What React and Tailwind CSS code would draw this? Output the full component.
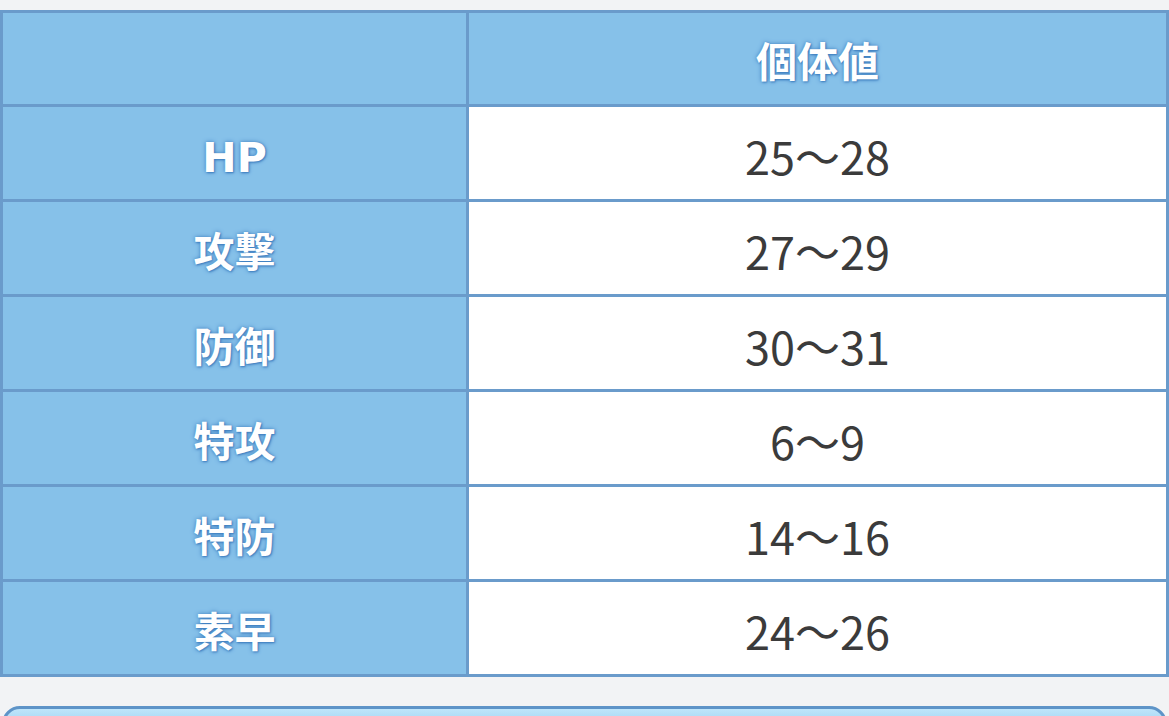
import React from "react";

const rows = [
  ["HP", "25〜28"],
  ["攻撃", "27〜29"],
  ["防御", "30〜31"],
  ["特攻", "6〜9"],
  ["特防", "14〜16"],
  ["素早", "24〜26"],
];

const labelCls =
  "bg-[#86c1e9] flex items-center justify-center pt-[11px] text-white font-bold text-[41px] [font-family:'DejaVu_Sans','Noto_Sans_CJK_JP',sans-serif] [text-shadow:0_0_4px_#3f7fc0,1px_1px_2px_#3f7fc0]";

export default function App() {
  return (
    <div className="h-[716px] overflow-hidden bg-[#f2f3f5] pt-[10px]">
      {/* TABLE */}
      <div className="grid grid-cols-[463px_1fr] grid-rows-[91px_repeat(6,92px)] gap-[3px] bg-[#6a9bcb] border-[3px] border-[#6a9bcb]">
        <div className="bg-[#86c1e9]" />
        <div className={labelCls}>個体値</div>
        {rows.map(([label, value]) => (
          <React.Fragment key={label}>
            <div className={labelCls}>{label}</div>
            <div className="bg-white flex items-center justify-center pt-[5px] text-[#3b3b3b] text-[45px] [font-family:'Noto_Sans_CJK_JP',sans-serif]">
              {value}
            </div>
          </React.Fragment>
        ))}
      </div>

      {/* NEXT BOX */}
      <div className="mt-[29px] mx-[2px] h-[40px] rounded-t-[18px] border-[3px] border-[#5e94c8] bg-gradient-to-b from-[#bfe5fa] to-[#7fc1ec]" />
    </div>
  );
}
